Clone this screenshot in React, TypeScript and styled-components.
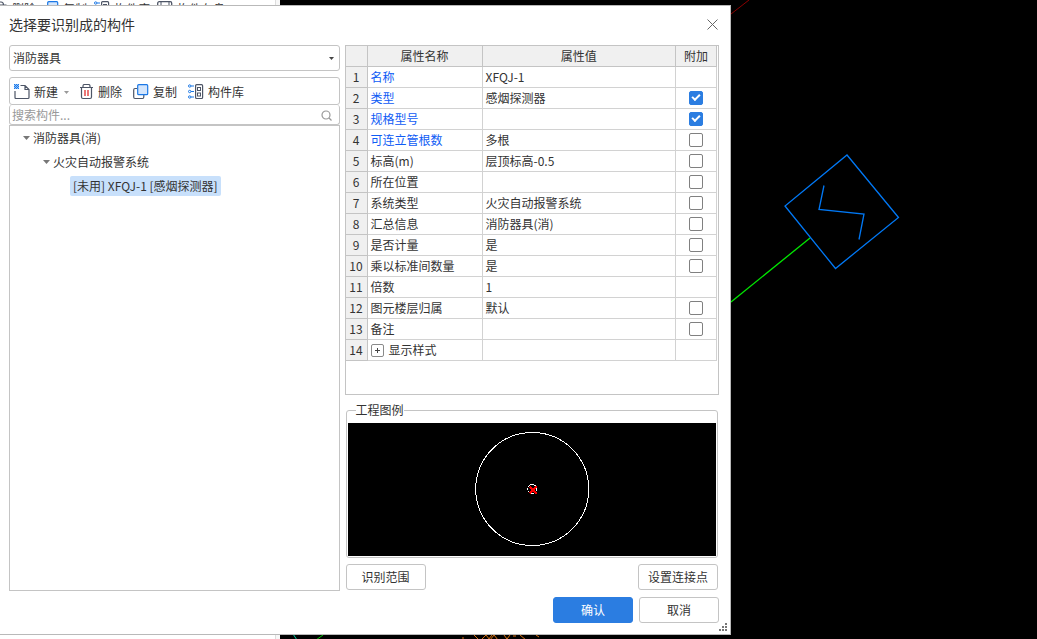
import React from "react";
import styled, { createGlobalStyle, css } from "styled-components";

const line = "#c4c4c4";
const ink = "#333333";
const slate = "#4d5566";
const blue = "#1b78e6";

const GlobalStyle = createGlobalStyle`
  *, *::before, *::after { box-sizing: border-box; }
  body {
    margin: 0;
    background: #000;
    color: ${ink};
    font: 12px/20px "Noto Sans CJK SC", sans-serif;
  }
  button, input, select { font: inherit; color: inherit; }
`;

const Screen = styled.div`
  position: relative;
  display: flex;
  align-items: stretch;
  min-height: 100vh;
  padding: 5px 0 4px;
  overflow: hidden;
`;

const Workspace = styled.div`
  position: absolute;
  inset: 0;
  display: flex;
`;

const SidePane = styled.div`
  flex: 0 0 280px;
  height: 100%;
  padding-right: 4px;
  background: #f7f7f7;
`;

const SideInner = styled.div`
  height: 100%;
  border-right: 1px solid #dddddd;
  background: #fff;
`;

const SideToolbar = styled.div`
  display: flex;
  align-items: flex-start;
  gap: 7px;
  padding-top: 1px;
  line-height: 16px;
`;

const Drawing = styled.svg`
  flex: 1 1 0;
  min-width: 0;
  height: 100%;
  background: #000;
`;

const Dialog = styled.section`
  position: relative;
  display: flex;
  flex-direction: column;
  width: 100%;
  max-width: 731px;
  padding: 0 11px 8px 9px;
  border: 1px solid #b9b9b9;
  border-left: 0;
  background: #fff;
`;

const TitleBar = styled.header`
  display: flex;
  align-items: center;
  justify-content: space-between;
  height: 39px;
  padding-bottom: 3px;
`;

const Title = styled.h1`
  margin: 0;
  font-size: 14px;
  font-weight: 400;
`;

const CloseButton = styled.button`
  display: flex;
  padding: 1px;
  border: 0;
  background: none;
`;

const Columns = styled.div`
  display: flex;
  flex: 1;
  gap: 5px;
`;

const LeftColumn = styled.div`
  display: flex;
  flex: 331 1 0;
  flex-direction: column;
  min-width: 0;
  padding-bottom: 35px;
`;

const RightColumn = styled.div`
  display: flex;
  flex: 375 1 0;
  flex-direction: column;
  min-width: 0;
`;

const SelectBox = styled.div`
  position: relative;
  margin-bottom: 6px;
  svg { position: absolute; right: 6px; top: 12px; pointer-events: none; }
`;

const TypeSelect = styled.select`
  display: block;
  width: 100%;
  height: 26px;
  padding: 0 20px 0 3px;
  border: 1px solid ${line};
  border-radius: 3px;
  appearance: none;
  background: #fff;
`;

const Toolbar = styled.div`
  display: flex;
  align-items: center;
  gap: 11px;
  height: 28px;
  padding: 2px 4px 0;
  border: 1px solid ${line};
  border-radius: 3px;
`;

const ToolButton = styled.button`
  display: flex;
  flex: none;
  align-items: center;
  gap: 4px;
  padding: 0;
  border: 0;
  background: none;
  white-space: nowrap;
`;

const MenuArrow = styled.span`
  display: flex;
  padding-left: 2px;
`;

const SearchBox = styled.label`
  display: flex;
  align-items: center;
  height: 20px;
  padding: 1px 7px 0 2px;
  border: 1px solid ${line};
  border-top-width: 0;
  border-radius: 3px;
`;

const SearchInput = styled.input`
  flex: 1;
  min-width: 0;
  padding: 0;
  border: 0;
  outline: 0;
  background: none;
  &::placeholder { color: #999; opacity: 1; }
`;

const Tree = styled.ul`
  flex: 1;
  margin: 0;
  padding: 0 0 0 13px;
  border: 1px solid ${line};
  list-style: none;
`;

const Branch = styled.ul`
  margin: 0;
  padding: 0 0 0 20px;
  list-style: none;
`;

const TreeRow = styled.div`
  display: flex;
  align-items: center;
  gap: 3px;
  height: 24px;
  white-space: nowrap;
`;

const SelectedNode = styled.span`
  margin-left: 7px;
  padding: 0 3px;
  border-radius: 2px;
  background: #c8e0fb;
`;

const TablePanel = styled.div`
  flex: 1;
  padding-right: 1px;
  border: 1px solid ${line};
`;

const PropertyTable = styled.table`
  width: 100%;
  border-spacing: 0;
  table-layout: fixed;
`;

const cell = css`
  height: 21px;
  border: solid #d2d2d2;
  border-width: 0 1px 1px 0;
  white-space: nowrap;
`;

const HeadCell = styled.th<{ $width?: number }>`
  ${cell}
  width: ${(p) => (p.$width ? `${p.$width}px` : "auto")};
  padding: 0;
  border-color: ${line};
  background: #f0f0f0;
  font-weight: 400;
`;

const Cell = styled.td<{ $key?: boolean }>`
  ${cell}
  padding: 0 3px;
  color: ${(p) => (p.$key ? "#0f5cf5" : ink)};
`;

const CheckCell = styled.td`
  ${cell}
  padding: 0;
`;

const CheckBox = styled.input`
  display: block;
  width: 14px;
  height: 14px;
  margin: 0 auto;
  border: 1px solid #808080;
  border-radius: 2px;
  appearance: none;
  background: #fff;
  &:checked {
    border-color: #2b7de1;
    background: #2b7de1;
  }
  &:checked::after {
    content: "";
    display: block;
    width: 8px;
    height: 5px;
    margin: 2px;
    border: solid #fff;
    border-width: 0 0 2px 2px;
    transform: rotate(-45deg);
  }
`;

const Group = styled.span`
  display: flex;
  align-items: center;
  gap: 5px;
`;

const ExpandButton = styled.button`
  display: flex;
  align-items: center;
  justify-content: center;
  width: 13px;
  height: 13px;
  padding: 0;
  border: 1px solid #8a8a8a;
  border-radius: 2px;
  background: #fff;
`;

const Legend = styled.fieldset`
  min-width: 0;
  margin: 5px 1px 6px;
  padding: 3px 1px 1px;
  border: 1px solid ${line};
  border-radius: 3px;
  legend {
    margin-left: 8px;
    padding: 0;
  }
`;

const LegendDrawing = styled.svg`
  display: block;
  width: 100%;
  height: 133px;
  background: #000;
`;

const ButtonRow = styled.div<{ $spread?: boolean }>`
  display: flex;
  justify-content: ${(p) => (p.$spread ? "space-between" : "flex-end")};
  gap: 6px;
  padding: ${(p) => (p.$spread ? "0 1px 7px" : "0 0 3px")};
`;

const Button = styled.button<{ $primary?: boolean }>`
  width: 80px;
  height: 26px;
  padding: 0;
  border: 1px solid ${(p) => (p.$primary ? "#2b7de1" : line)};
  border-radius: 3px;
  background: ${(p) => (p.$primary ? "#2b7de1" : "#fff")};
  color: ${(p) => (p.$primary ? "#fff" : ink)};
`;

const Grip = styled.svg`
  position: absolute;
  right: 3px;
  bottom: 3px;
`;

const Triangle = ({ w = 7, h = 4, fill = "#777" }: { w?: number; h?: number; fill?: string }) => (
  <svg width={w} height={h} viewBox="0 0 7 4" preserveAspectRatio="none" aria-hidden="true">
    <path d="M0 0h7L3.5 4z" fill={fill} />
  </svg>
);

const NewIcon = () => (
  <svg width="16" height="16" viewBox="0 0 16 16" fill="none" aria-hidden="true">
    <path d="M6.5 1.5h4.5l4 4v8q0 1-1 1H2q-1 0-1-1V7M11 1.5v4h4" stroke={slate} strokeWidth="1.2" />
    <rect width="5" height="5" fill="#8fc0fa" />
    <path shapeRendering="crispEdges" d="M0 0h1v1H0zM2 0h1v1H2zM4 0h1v1H4zM1 1h1v1H1zM3 1h1v1H3zM0 2h1v1H0zM2 2h1v1H2zM4 2h1v1H4zM1 3h1v1H1zM3 3h1v1H3zM0 4h1v1H0zM2 4h1v1H2zM4 4h1v1H4z" fill={blue} />
  </svg>
);

const DeleteIcon = () => (
  <svg width="14" height="16" viewBox="0 0 14 16" fill="none" aria-hidden="true">
    <path d="M0 3.5h13M3 3.5V2q0-1.500 1.500-1.500h4q1.500 0 1.500 1.500V3.500M1.500 3.500v9.500q0 1.500 1.500 1.500h7q1.500 0 1.500-1.500V3.500" stroke={slate} strokeWidth="1.2" />
    <path d="M5 6v6M8 6v6" stroke="#e02f2f" strokeWidth="1.3" />
  </svg>
);

const CopyIcon = () => (
  <svg width="16" height="16" viewBox="0 0 16 16" fill="none" aria-hidden="true">
    <path d="M4 4.500H2Q.7 4.500.7 6v7q0 1.500 1.300 1.500h7.500q1.300 0 1.300-1.500v-2" stroke={slate} strokeWidth="1.2" />
    <rect x="4.700" y=".7" width="10" height="10" rx="1" fill="#d3e5fc" stroke={blue} strokeWidth="1.2" />
  </svg>
);

const LibraryIcon = () => (
  <svg width="16" height="16" viewBox="0 0 16 16" fill="none" aria-hidden="true">
    <path d="M3 2h3M3 7.500h3M3 13h3" stroke={blue} strokeWidth="1.200" />
    <g stroke={blue}>
      <circle cx="1.700" cy="2" r="1.200" />
      <circle cx="1.700" cy="7.500" r="1.200" />
      <circle cx="1.700" cy="13" r="1.200" />
    </g>
    <rect x="7.600" y=".7" width="7" height="13.800" rx="1" stroke={slate} strokeWidth="1.200" />
    <rect x="9.500" y="3.500" width="3" height="3" stroke={slate} />
    <rect x="9.500" y="9" width="3" height="3" stroke={slate} />
  </svg>
);

const SaveIcon = () => (
  <svg width="16" height="16" viewBox="0 0 16 16" fill="none" aria-hidden="true">
    <rect x=".7" y=".7" width="14" height="14" rx="1.500" stroke={slate} strokeWidth="1.300" />
    <path d="M4 1v4h8V1" stroke={slate} />
  </svg>
);

type Property = { name: string; value?: string; key?: boolean; check?: boolean; group?: boolean };

const properties: Property[] = [
  { name: "名称", value: "XFQJ-1", key: true },
  { name: "类型", value: "感烟探测器", key: true, check: true },
  { name: "规格型号", key: true, check: true },
  { name: "可连立管根数", value: "多根", key: true, check: false },
  { name: "标高(m)", value: "层顶标高-0.5", check: false },
  { name: "所在位置", check: false },
  { name: "系统类型", value: "火灾自动报警系统", check: false },
  { name: "汇总信息", value: "消防器具(消)", check: false },
  { name: "是否计量", value: "是", check: false },
  { name: "乘以标准间数量", value: "是", check: false },
  { name: "倍数", value: "1" },
  { name: "图元楼层归属", value: "默认", check: false },
  { name: "备注", check: false },
  { name: "显示样式", group: true },
];

const Background = () => (
  <Workspace aria-hidden="true">
    <SidePane>
      <SideInner>
        <SideToolbar>
          <ToolButton tabIndex={-1}><svg width="8" height="16" viewBox="7 0 8 16" fill="none"><path d="M7 4h6.500M7 1h1q2.500 0 2.500 3M12 4v9q0 1.500-1.500 1.500H7" stroke={slate} strokeWidth="1.200" /></svg>删除</ToolButton>
          <ToolButton tabIndex={-1}><CopyIcon />复制</ToolButton>
          <ToolButton tabIndex={-1}><LibraryIcon />构件库</ToolButton>
          <ToolButton tabIndex={-1}><SaveIcon />构件存盘</ToolButton>
        </SideToolbar>
      </SideInner>
    </SidePane>
    <Drawing fill="none">
      <path d="M451 14L469 0" stroke="#8a0000" />
      <path d="M451 302L530 238" stroke="#00e800" strokeWidth="1.300" />
      <path d="M567 155l51.500 62.500-63 51L505 206zM544 185.500l-5 24 45 4.500-5 25.500" stroke="#0078f5" strokeWidth="1.300" />
      <path d="M13 634l4 6" stroke="#00c8a0" />
      <path d="M43 635l-7 5" stroke="#00c800" />
      <path d="M194 635l5 5M201 640l5-5 4 5 4-5 4 5M212 635l-4 5M224 635l3 4 3-4M233 636h3M240 635l6 5M256 635l3 2M182 638h2" stroke="#d87010" />
    </Drawing>
  </Workspace>
);

export default function App() {
  return (
    <Screen>
      <GlobalStyle />
      <Background />
      <Dialog role="dialog" aria-labelledby="dialog-title">
        <TitleBar>
          <Title id="dialog-title">选择要识别成的构件</Title>
          <CloseButton aria-label="关闭">
            <svg width="11" height="11" viewBox="0 0 11 11"><path d="M.5.5l10 10M10.500.5l-10 10" stroke="#666" /></svg>
          </CloseButton>
        </TitleBar>
        <Columns>
          <LeftColumn>
            <SelectBox>
              <TypeSelect aria-label="构件类型" defaultValue="消防器具">
                <option>消防器具</option>
              </TypeSelect>
              <Triangle w={5} h={3} fill="#444" />
            </SelectBox>
            <Toolbar>
              <ToolButton><NewIcon />新建<MenuArrow><Triangle w={5} h={3} fill="#999" /></MenuArrow></ToolButton>
              <ToolButton><DeleteIcon />删除</ToolButton>
              <ToolButton><CopyIcon />复制</ToolButton>
              <ToolButton><LibraryIcon />构件库</ToolButton>
            </Toolbar>
            <SearchBox>
              <SearchInput aria-label="搜索构件" placeholder="搜索构件..." />
              <svg width="11" height="11" viewBox="0 0 11 11" fill="none" stroke="#999" strokeWidth="1.200" aria-hidden="true">
                <circle cx="5" cy="5" r="4" /><path d="M8 8l2.500 2.500" />
              </svg>
            </SearchBox>
            <Tree>
              <li>
                <TreeRow><Triangle />消防器具(消)</TreeRow>
                <Branch>
                  <li>
                    <TreeRow><Triangle />火灾自动报警系统</TreeRow>
                    <Branch>
                      <li><TreeRow><SelectedNode>[未用] XFQJ-1 [感烟探测器]</SelectedNode></TreeRow></li>
                    </Branch>
                  </li>
                </Branch>
              </li>
            </Tree>
          </LeftColumn>
          <RightColumn>
            <TablePanel>
              <PropertyTable>
                <thead>
                  <tr>
                    <HeadCell $width={22} aria-label="序号" />
                    <HeadCell $width={115}>属性名称</HeadCell>
                    <HeadCell>属性值</HeadCell>
                    <HeadCell $width={41}>附加</HeadCell>
                  </tr>
                </thead>
                <tbody>
                  {properties.map((p, i) => (
                    <tr key={p.name}>
                      <HeadCell scope="row">{i + 1}</HeadCell>
                      <Cell $key={p.key}>
                        {p.group ? (
                          <Group>
                            <ExpandButton aria-label={`展开${p.name}`}>
                              <svg width="5" height="5" viewBox="0 0 5 5"><path d="M0 2.500h5M2.500 0v5" stroke="#444" /></svg>
                            </ExpandButton>
                            {p.name}
                          </Group>
                        ) : p.name}
                      </Cell>
                      <Cell>{p.value}</Cell>
                      <CheckCell>
                        {p.check !== undefined && (
                          <CheckBox type="checkbox" defaultChecked={p.check} aria-label={`附加${p.name}`} />
                        )}
                      </CheckCell>
                    </tr>
                  ))}
                </tbody>
              </PropertyTable>
            </TablePanel>
            <Legend>
              <legend>工程图例</legend>
              <LegendDrawing viewBox="0 0 368 133" fill="none" shapeRendering="crispEdges">
                <circle cx="184" cy="66" r="56.500" stroke="#fff" />
                <circle cx="184" cy="66" r="4.500" stroke="#fff" />
                <path d="M181.500 63.500l7 7M188.500 63.500l-7 7" stroke="#f00" strokeWidth="2" />
              </LegendDrawing>
            </Legend>
            <ButtonRow $spread>
              <Button>识别范围</Button>
              <Button>设置连接点</Button>
            </ButtonRow>
            <ButtonRow>
              <Button $primary>确认</Button>
              <Button>取消</Button>
            </ButtonRow>
          </RightColumn>
        </Columns>
        <Grip width="8" height="8" viewBox="0 0 8 8" fill="#777" aria-hidden="true">
          <path d="M6 0h2v2H6zM3 3h2v2H3zM6 3h2v2H6zM0 6h2v2H0zM3 6h2v2H3zM6 6h2v2H6z" />
        </Grip>
      </Dialog>
    </Screen>
  );
}
